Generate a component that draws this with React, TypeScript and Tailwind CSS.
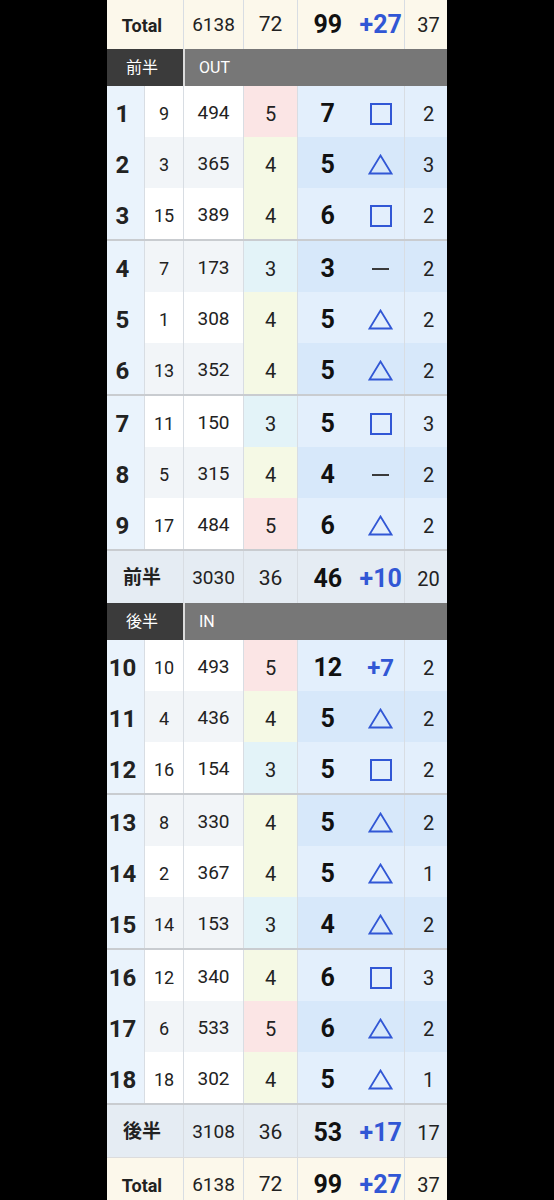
import React from 'react';

type Hole = { no: number; hcp: number; yard: number; par: number; score: number; putt: number };

const front: Hole[] = [
  { no: 1, hcp: 9, yard: 494, par: 5, score: 7, putt: 2 },
  { no: 2, hcp: 3, yard: 365, par: 4, score: 5, putt: 3 },
  { no: 3, hcp: 15, yard: 389, par: 4, score: 6, putt: 2 },
  { no: 4, hcp: 7, yard: 173, par: 3, score: 3, putt: 2 },
  { no: 5, hcp: 1, yard: 308, par: 4, score: 5, putt: 2 },
  { no: 6, hcp: 13, yard: 352, par: 4, score: 5, putt: 2 },
  { no: 7, hcp: 11, yard: 150, par: 3, score: 5, putt: 3 },
  { no: 8, hcp: 5, yard: 315, par: 4, score: 4, putt: 2 },
  { no: 9, hcp: 17, yard: 484, par: 5, score: 6, putt: 2 },
];

const back: Hole[] = [
  { no: 10, hcp: 10, yard: 493, par: 5, score: 12, putt: 2 },
  { no: 11, hcp: 4, yard: 436, par: 4, score: 5, putt: 2 },
  { no: 12, hcp: 16, yard: 154, par: 3, score: 5, putt: 2 },
  { no: 13, hcp: 8, yard: 330, par: 4, score: 5, putt: 2 },
  { no: 14, hcp: 2, yard: 367, par: 4, score: 5, putt: 1 },
  { no: 15, hcp: 14, yard: 153, par: 3, score: 4, putt: 2 },
  { no: 16, hcp: 12, yard: 340, par: 4, score: 6, putt: 3 },
  { no: 17, hcp: 6, yard: 533, par: 5, score: 6, putt: 2 },
  { no: 18, hcp: 18, yard: 302, par: 4, score: 5, putt: 1 },
];

const parBg: Record<number, string> = {
  3: 'bg-[#e3f3f8]',
  4: 'bg-[#f5f9e5]',
  5: 'bg-[#fbe5e5]',
};

// mark by score - par: par = dash, bogey = triangle, double = square, more = +n
const Mark = ({ diff }: { diff: number }) => {
  if (diff === 0) return <div className="w-[17px] h-[2px] bg-[#3a3a3a]" />;
  if (diff === 1)
    return (
      <svg width="25" height="21" viewBox="0 0 25 21">
        <path d="M12.5 1.5 L23.5 19.5 L1.5 19.5 Z" fill="none" stroke="#3157d5" strokeWidth="1.8" />
      </svg>
    );
  if (diff === 2)
    return (
      <svg width="22" height="22" viewBox="0 0 22 22">
        <rect x="1" y="1" width="20" height="20" fill="none" stroke="#3157d5" strokeWidth="2" />
      </svg>
    );
  return <span className="text-[24px] font-bold text-[#3157d5]">+{diff}</span>;
};

const line = 'border-r border-[#d8dde3]';

const HoleRow = ({ h, i }: { h: Hole; i: number }) => {
  const even = i % 2 === 1;
  const plain = even ? 'bg-[#f2f5f8]' : 'bg-white';
  const blue = even ? 'bg-[#d7e8fa]' : 'bg-[#e3effc]';
  return (
    <div className="flex h-[51px] items-stretch text-[#222]">
      <div className={`w-[38px] ${line} bg-[#eaf3fc] flex items-center justify-center pr-[6px] pt-[4px] text-[24px] font-bold`}>
        {h.no}
      </div>
      <div className={`w-[39px] ${line} ${plain} flex items-center justify-center pt-[4px] text-[18px]`}>{h.hcp}</div>
      <div className={`w-[60px] ${line} ${plain} flex items-center justify-center pt-[4px] text-[19px]`}>{h.yard}</div>
      <div className={`w-[54px] ${line} ${parBg[h.par]} flex items-center justify-center pt-[4px] text-[20px]`}>{h.par}</div>
      <div className={`w-[107px] ${line} ${blue} flex items-center pt-[4px]`}>
        <div className="w-[60px] flex items-center justify-center text-[25px] font-bold text-[#111]">{h.score}</div>
        <div className="w-[47px] flex items-center justify-center">
          <Mark diff={h.score - h.par} />
        </div>
      </div>
      <div className={`w-[42px] ${blue} flex items-center justify-center pl-[5px] pt-[4px] text-[20px]`}>{h.putt}</div>
    </div>
  );
};

const SumRow = ({
  label,
  yard,
  par,
  score,
  putt,
  bg,
  latin,
}: {
  label: string;
  yard: number;
  par: number;
  score: number;
  putt: number;
  bg: string;
  latin?: boolean;
}) => (
  <div className={`flex items-stretch text-[#222] ${bg} ${latin ? 'h-[51px]' : 'h-[52px]'}`}>
    <div className={`w-[77px] ${line} flex items-center justify-center pr-[6px] pt-[3px] font-bold ${latin ? 'text-[18px]' : 'text-[19px]'}`}>
      {label}
    </div>
    <div className={`w-[60px] ${line} flex items-center justify-center pt-[3px] text-[19px]`}>{yard}</div>
    <div className={`w-[54px] ${line} flex items-center justify-center pt-[3px] text-[21px]`}>{par}</div>
    <div className={`w-[107px] ${line} flex items-center pt-[3px]`}>
      <div className="w-[60px] flex items-center justify-center text-[25px] font-bold text-[#111]">{score}</div>
      <div className="w-[47px] flex items-center justify-center text-[25px] font-bold text-[#3157d5]">
        +{score - par}
      </div>
    </div>
    <div className="w-[42px] flex items-center justify-center pl-[5px] pt-[3px] text-[20px]">{putt}</div>
  </div>
);

const Header = ({ jp, en }: { jp: string; en: string }) => (
  <div className="flex h-[37px] text-white text-[16px]">
    <div className="w-[76px] bg-[#3b3b3b] flex items-center justify-center pr-[6px]">{jp}</div>
    <div className="w-[2px] bg-[#dcdcdc]" />
    <div className="flex-1 bg-[#777777] flex items-center pl-[14px]">{en}</div>
  </div>
);

const Group = ({ holes, start }: { holes: Hole[]; start: number }) => (
  <div>
    {holes.map((h, i) => (
      <HoleRow key={h.no} h={h} i={start + i} />
    ))}
  </div>
);

const Half = ({ holes, jp, en, yard, par, score, putt }: { holes: Hole[]; jp: string; en: string; yard: number; par: number; score: number; putt: number }) => (
  <div>
    <Header jp={jp} en={en} />
    <Group holes={holes.slice(0, 3)} start={0} />
    <div className="h-[2px] bg-[#c9ccd0]" />
    <Group holes={holes.slice(3, 6)} start={3} />
    <div className="h-[2px] bg-[#c9ccd0]" />
    <Group holes={holes.slice(6, 9)} start={6} />
    <div className="h-[2px] bg-[#c9ccd0]" />
    <SumRow label={jp} yard={yard} par={par} score={score} putt={putt} bg="bg-[#e5ecf3]" />
  </div>
);

export default function App() {
  return (
    <div
      className="w-[554px] h-[1200px] bg-black overflow-hidden"
      style={{ fontFamily: 'Roboto, "Noto Sans CJK JP", sans-serif' }}
    >
      <div className="w-[340px] mx-auto -mt-[2px]">
        <SumRow label="Total" yard={6138} par={72} score={99} putt={37} bg="bg-[#fcf8eb]" latin />
        <Half holes={front} jp="前半" en="OUT" yard={3030} par={36} score={46} putt={20} />
        <Half holes={back} jp="後半" en="IN" yard={3108} par={36} score={53} putt={17} />
        <div className="h-[1px] bg-[#dcdcdc]" />
        <SumRow label="Total" yard={6138} par={72} score={99} putt={37} bg="bg-[#fcf8eb]" latin />
      </div>
    </div>
  );
}
